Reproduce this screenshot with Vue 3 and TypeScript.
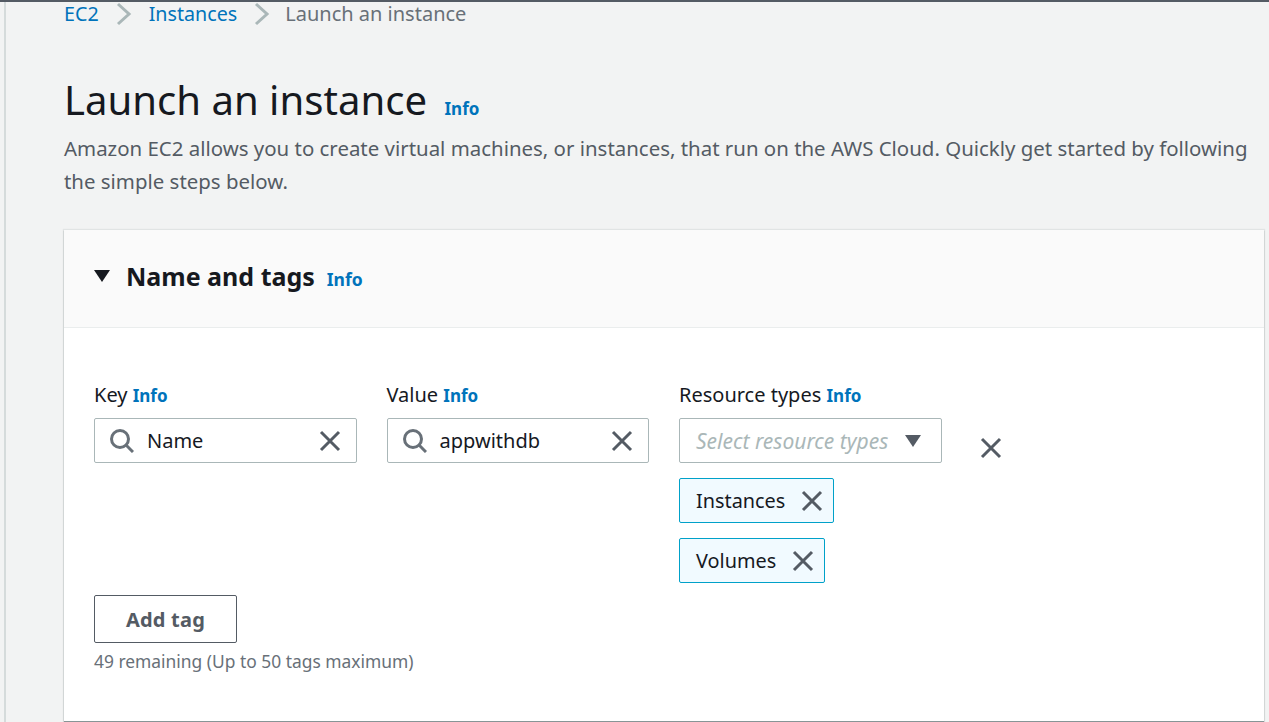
<script setup lang="ts">
const crumbs = [
  { label: 'EC2', link: true },
  { label: 'Instances', link: true },
  { label: 'Launch an instance', link: false },
]
const fields = [
  { label: 'Key', value: 'Name' },
  { label: 'Value', value: 'appwithdb' },
]
const tokens = ['Instances', 'Volumes']
</script>

<template>
  <div class="page">
    <div class="rail"></div>
    <main class="content">
      <nav class="crumbs">
        <template v-for="(c, i) in crumbs" :key="c.label">
          <span :class="c.link ? 'link' : 'current'">{{ c.label }}</span>
          <svg v-if="i < crumbs.length - 1" class="sep" viewBox="0 0 16 24" width="16" height="24">
            <path d="M2 2 L13 12 L2 22" fill="none" stroke="#aab7b8" stroke-width="3" />
          </svg>
        </template>
      </nav>
      <div class="title-row">
        <h1>Launch an instance</h1>
        <a class="info info-h1">Info</a>
      </div>
      <p class="desc">Amazon EC2 allows you to create virtual machines, or instances, that run on the AWS Cloud. Quickly get started by following the simple steps below.</p>

      <section class="card">
        <header class="card-head">
          <svg class="caret" viewBox="0 0 16 12" width="16" height="12">
            <path d="M0 0 H16 L8 12 Z" fill="#16191f" />
          </svg>
          <h2>Name and tags</h2>
          <a class="info info-h2">Info</a>
        </header>
        <div class="card-body">
          <div class="row">
            <div v-for="f in fields" :key="f.label" class="field">
              <label class="label">{{ f.label }} <a class="info">Info</a></label>
              <div class="input">
                <svg class="search" viewBox="0 0 24 24" width="24" height="24">
                  <circle cx="10" cy="10" r="8.5" fill="none" stroke="#687078" stroke-width="3" />
                  <path d="M16 16 L23 23" stroke="#687078" stroke-width="3" />
                </svg>
                <span class="value">{{ f.value }}</span>
                <svg class="x" viewBox="0 0 22 22" width="22" height="22">
                  <path d="M2 2 L20 20 M20 2 L2 20" stroke="#545b64" stroke-width="3" />
                </svg>
              </div>
            </div>
            <div class="field">
              <label class="label">Resource types <a class="info">Info</a></label>
              <div class="input select">
                <span class="placeholder">Select resource types</span>
                <svg viewBox="0 0 16 12" width="16" height="12">
                  <path d="M0 0 H16 L8 12 Z" fill="#545b64" />
                </svg>
              </div>
              <div v-for="t in tokens" :key="t" class="token">
                <span>{{ t }}</span>
                <svg class="x" viewBox="0 0 22 22" width="22" height="22">
                  <path d="M2 2 L20 20 M20 2 L2 20" stroke="#545b64" stroke-width="3" />
                </svg>
              </div>
            </div>
            <svg class="x remove" viewBox="0 0 22 22" width="22" height="22">
              <path d="M2 2 L20 20 M20 2 L2 20" stroke="#545b64" stroke-width="3" />
            </svg>
          </div>
          <button class="add" type="button">Add tag</button>
          <p class="hint">49 remaining (Up to 50 tags maximum)</p>
        </div>
      </section>
    </main>
  </div>
</template>

<style>
html, body { margin: 0; overflow: hidden; }
</style>

<style scoped>
.page {
  display: flex;
  width: 1269px;
  height: 722px;
  box-sizing: border-box;
  overflow: hidden;
  background: #f2f3f3;
  border-top: 2px solid #545b64;
  font-family: "Noto Sans", sans-serif;
  color: #16191f;
}
.rail {
  flex: none;
  width: 2px;
  margin-left: 4px;
  background: #d5dbdb;
}
.content {
  flex: 1;
  min-width: 0;
  padding: 0 5px 0 58px;
}
.crumbs {
  display: flex;
  align-items: center;
  height: 24px;
  font-size: 20px;
  line-height: 24px;
}
.sep { margin: 0 17px; }
.link { color: #0073bb; font-size: 19.7px; }
.current { color: #687078; margin-left: -2px; }
.title-row {
  display: flex;
  align-items: baseline;
  margin-top: 47px;
}
h1 {
  margin: 0;
  font-size: 40.1px;
  line-height: 54px;
  font-weight: 400;
}
.info {
  color: #0073bb;
  font-size: 17px;
  font-weight: 700;
}
.info-h1 { margin-left: 17.5px; }
.desc {
  margin: 5px 0 0;
  width: 1190px;
  font-size: 20.43px;
  line-height: 33px;
  color: #545b64;
}
.card {
  margin-top: 32px;
  height: 491px;
  background: #fff;
  box-shadow: 0 1px 1px 0 #879596, 0 0 1px 1px rgba(213, 219, 219, .6);
}
.card-head {
  display: flex;
  align-items: center;
  box-sizing: border-box;
  height: 98px;
  padding: 0 0 5px 30px;
  background: #fafafa;
  border-bottom: 1px solid #eaeded;
}
h2 {
  margin: 0 12px 0 16px;
  font-size: 25px;
  font-weight: 700;
}
.info-h2 { font-size: 17.5px; margin-top: 5px; }
.card-body { padding: 54px 30px 0; }
.row {
  display: flex;
  align-items: flex-start;
  gap: 30px;
}
.field {
  display: flex;
  flex-direction: column;
  align-items: flex-start;
  width: 262.5px;
}
.label {
  height: 36px;
  font-size: 20px;
  line-height: 26px;
  white-space: nowrap;
}
.input {
  display: flex;
  align-items: center;
  box-sizing: border-box;
  width: 100%;
  height: 45px;
  padding: 0 15px;
  background: #fff;
  border: 1px solid #aab7b8;
  border-radius: 2px;
}
.value {
  flex: 1;
  margin-left: 13px;
  font-size: 20px;
}
.select { gap: 17px; padding-left: 16px; }
.placeholder {
  font-size: 21px;
  font-style: italic;
  color: #aab7b8;
}
.token {
  display: flex;
  align-items: center;
  box-sizing: border-box;
  height: 45px;
  margin-top: 15px;
  padding: 0 10px 0 16px;
  gap: 15.5px;
  font-size: 19.85px;
  background: #f1faff;
  border: 1px solid #00a1c9;
  border-radius: 2px;
}
.remove { margin: 55px 0 0 8px; }
.add {
  display: block;
  box-sizing: border-box;
  width: 143px;
  height: 48px;
  margin-top: 12px;
  background: #fff;
  border: 1px solid #545b64;
  border-radius: 2px;
  font: 700 20px "Noto Sans", sans-serif;
  letter-spacing: .2px;
  color: #545b64;
}
.hint {
  margin: 6px 0 0;
  font-size: 17.4px;
  line-height: 24px;
  color: #687078;
}
</style>
